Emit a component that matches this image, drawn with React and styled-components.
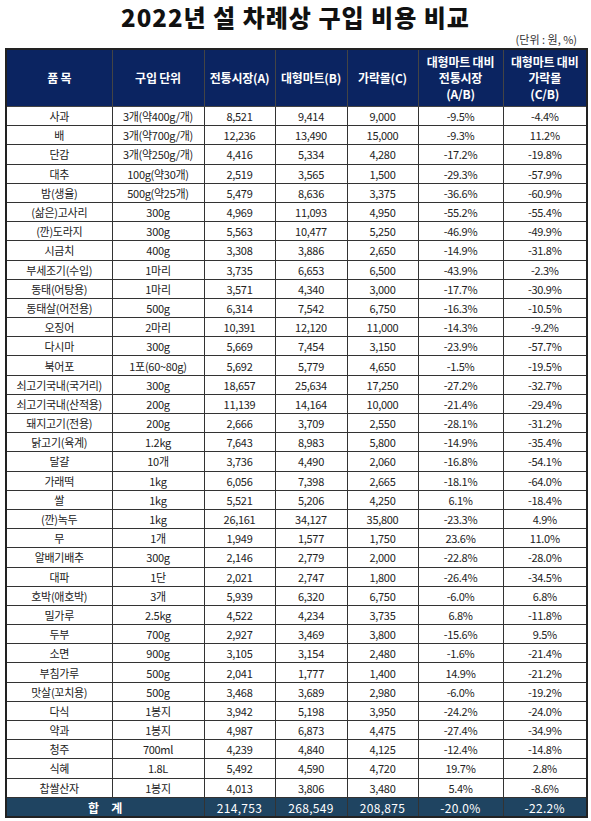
import React from "react";
import styled, { createGlobalStyle } from "styled-components";

const GlobalStyle = createGlobalStyle`
  html, body {
    margin: 0;
    padding: 0;
    background: #fff;
  }
  body {
    font-family: "Noto Sans CJK KR", "Noto Sans", sans-serif;
    color: #222;
  }
`;

//--- STYLED COMPONENTS ---//

const Page = styled.div`
  width: 591px;
  padding: 0 5px;
  box-sizing: border-box;
`;

const Title = styled.h1`
  margin: 0;
  padding-top: 2px;
  font-size: 24px;
  line-height: 30px;
  font-weight: 900;
  text-align: center;
  color: #111;
  letter-spacing: 1px;
`;

const Unit = styled.div`
  font-size: 11px;
  line-height: 14px;
  text-align: right;
  padding-right: 9px;
  margin-bottom: 2px;
  color: #333;
`;

const Table = styled.table`
  width: 581px;
  border-collapse: collapse;
  table-layout: fixed;
  border: 2px solid #222;
`;

const HeadCell = styled.th`
  background: #0b2461;
  color: #fff;
  font-size: 12px;
  font-weight: 700;
  line-height: 16px;
  height: 56px;
  padding: 0;
  border: 1px solid #444;
  text-align: center;
  white-space: nowrap;
  letter-spacing: -0.2px;
`;

const Row = styled.tr`
  height: 19.2px;
`;

const Cell = styled.td`
  font-size: 11px;
  line-height: 14px;
  padding: 0;
  border: 1px solid #333;
  text-align: center;
  white-space: nowrap;
  letter-spacing: -0.3px;
  color: #222;
`;

const TotalRow = styled.tr`
  height: 20px;
  background: #1f4461;
`;

const TotalCell = styled.td`
  color: #fff;
  font-size: 12px;
  font-weight: ${({ $label }) => ($label ? 700 : 400)};
  word-spacing: ${({ $label }) => ($label ? "9px" : "0")};
  letter-spacing: 0.3px;
  padding: 0;
  border: 1px solid #333;
  text-align: center;
  white-space: nowrap;
`;

//--- DATA ---//

const cols = [106, 92, 71, 72, 71, 85, 84];

const rows = [
  ["사과", "3개(약400g/개)", "8,521", "9,414", "9,000", "-9.5%", "-4.4%"],
  ["배", "3개(약700g/개)", "12,236", "13,490", "15,000", "-9.3%", "11.2%"],
  ["단감", "3개(약250g/개)", "4,416", "5,334", "4,280", "-17.2%", "-19.8%"],
  ["대추", "100g(약30개)", "2,519", "3,565", "1,500", "-29.3%", "-57.9%"],
  ["밤(생율)", "500g(약25개)", "5,479", "8,636", "3,375", "-36.6%", "-60.9%"],
  ["(삶은)고사리", "300g", "4,969", "11,093", "4,950", "-55.2%", "-55.4%"],
  ["(깐)도라지", "300g", "5,563", "10,477", "5,250", "-46.9%", "-49.9%"],
  ["시금치", "400g", "3,308", "3,886", "2,650", "-14.9%", "-31.8%"],
  ["부세조기(수입)", "1마리", "3,735", "6,653", "6,500", "-43.9%", "-2.3%"],
  ["동태(어탕용)", "1마리", "3,571", "4,340", "3,000", "-17.7%", "-30.9%"],
  ["동태살(어전용)", "500g", "6,314", "7,542", "6,750", "-16.3%", "-10.5%"],
  ["오징어", "2마리", "10,391", "12,120", "11,000", "-14.3%", "-9.2%"],
  ["다시마", "300g", "5,669", "7,454", "3,150", "-23.9%", "-57.7%"],
  ["북어포", "1포(60~80g)", "5,692", "5,779", "4,650", "-1.5%", "-19.5%"],
  ["쇠고기국내(국거리)", "300g", "18,657", "25,634", "17,250", "-27.2%", "-32.7%"],
  ["쇠고기국내(산적용)", "200g", "11,139", "14,164", "10,000", "-21.4%", "-29.4%"],
  ["돼지고기(전용)", "200g", "2,666", "3,709", "2,550", "-28.1%", "-31.2%"],
  ["닭고기(육계)", "1.2kg", "7,643", "8,983", "5,800", "-14.9%", "-35.4%"],
  ["달걀", "10개", "3,736", "4,490", "2,060", "-16.8%", "-54.1%"],
  ["가래떡", "1kg", "6,056", "7,398", "2,665", "-18.1%", "-64.0%"],
  ["쌀", "1kg", "5,521", "5,206", "4,250", "6.1%", "-18.4%"],
  ["(깐)녹두", "1kg", "26,161", "34,127", "35,800", "-23.3%", "4.9%"],
  ["무", "1개", "1,949", "1,577", "1,750", "23.6%", "11.0%"],
  ["알배기배추", "300g", "2,146", "2,779", "2,000", "-22.8%", "-28.0%"],
  ["대파", "1단", "2,021", "2,747", "1,800", "-26.4%", "-34.5%"],
  ["호박(애호박)", "3개", "5,939", "6,320", "6,750", "-6.0%", "6.8%"],
  ["밀가루", "2.5kg", "4,522", "4,234", "3,735", "6.8%", "-11.8%"],
  ["두부", "700g", "2,927", "3,469", "3,800", "-15.6%", "9.5%"],
  ["소면", "900g", "3,105", "3,154", "2,480", "-1.6%", "-21.4%"],
  ["부침가루", "500g", "2,041", "1,777", "1,400", "14.9%", "-21.2%"],
  ["맛살(꼬치용)", "500g", "3,468", "3,689", "2,980", "-6.0%", "-19.2%"],
  ["다식", "1봉지", "3,942", "5,198", "3,950", "-24.2%", "-24.0%"],
  ["약과", "1봉지", "4,987", "6,873", "4,475", "-27.4%", "-34.9%"],
  ["청주", "700ml", "4,239", "4,840", "4,125", "-12.4%", "-14.8%"],
  ["식혜", "1.8L", "5,492", "4,590", "4,720", "19.7%", "2.8%"],
  ["찹쌀산자", "1봉지", "4,013", "3,806", "3,480", "5.4%", "-8.6%"],
];

//--- COMPONENT ---//

const App = () => {
  return (
    <Page>
      <GlobalStyle />
      <Title>2022년 설 차례상 구입 비용 비교</Title>
      <Unit>(단위 : 원, %)</Unit>
      <Table>
        <colgroup>
          {cols.map((w, i) => (
            <col key={i} style={{ width: w }} />
          ))}
        </colgroup>
        <thead>
          <tr>
            <HeadCell>품 목</HeadCell>
            <HeadCell>구입 단위</HeadCell>
            <HeadCell>전통시장(A)</HeadCell>
            <HeadCell>대형마트(B)</HeadCell>
            <HeadCell>가락몰(C)</HeadCell>
            <HeadCell>
              대형마트 대비
              <br />
              전통시장
              <br />
              (A/B)
            </HeadCell>
            <HeadCell>
              대형마트 대비
              <br />
              가락몰
              <br />
              (C/B)
            </HeadCell>
          </tr>
        </thead>
        <tbody>
          {rows.map((r) => (
            <Row key={r[0]}>
              {r.map((v, i) => (
                <Cell key={i}>{v}</Cell>
              ))}
            </Row>
          ))}
          <TotalRow>
            <TotalCell $label colSpan={2}>
              합 계
            </TotalCell>
            <TotalCell>214,753</TotalCell>
            <TotalCell>268,549</TotalCell>
            <TotalCell>208,875</TotalCell>
            <TotalCell>-20.0%</TotalCell>
            <TotalCell>-22.2%</TotalCell>
          </TotalRow>
        </tbody>
      </Table>
    </Page>
  );
};

export default App;
